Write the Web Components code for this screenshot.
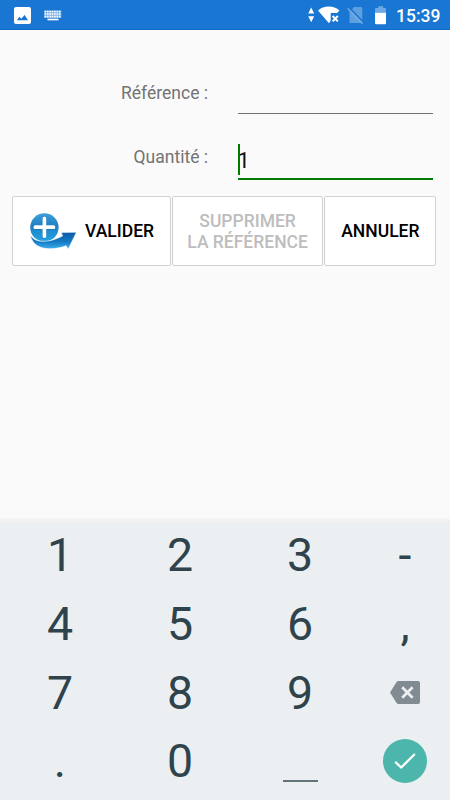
<!DOCTYPE html>
<html lang="fr">
<head>
<meta charset="UTF-8">
<meta name="viewport" content="width=device-width, initial-scale=1.0">
<title>Quantité</title>
<style>
    body {
        margin: 0;
        font-family: Roboto, "Liberation Sans", sans-serif;
    }
</style>
</head>
<body>
<stock-screen></stock-screen>

<script>
class StatusBar extends HTMLElement {

    constructor() {
        super()
        this.shadow = this.attachShadow({ mode: 'open' })
    }

    connectedCallback() {
        this.render()
    }

    render() {
        this.shadow.innerHTML =
            /*html*/
            `
        <style>
            :host {
            display: flex;
            justify-content: space-between;
            align-items: center;
            height: 30px;
            box-sizing: border-box;
            padding: 0 10px 0 14px;
            background-color: #1976d2;
            border-bottom: 1px solid #1469c4;
            color: white;
            }

            svg {
            display: block;
            }

            .notifications, .system {
            display: flex;
            align-items: center;
            }

            .notifications {
            gap: 13px;
            padding-top: 1px;
            }

            .clock {
            font-size: 17.5px;
            font-weight: 500;
            line-height: 30px;
            margin: 2px 0 0 9px;
            width: 44px;
            white-space: nowrap;
            }
        </style>

        <div class="notifications">
            <svg width="17" height="17" viewBox="0 0 17 17">
                <rect width="17" height="17" rx="2" fill="#fff"/>
                <path d="M2.8 13.2 L5.5 9.8 L7.3 11.7 L10.6 8 L14 13.2 Z" fill="#1976d2"/>
            </svg>
            <svg width="18" height="11" viewBox="0 0 18 11">
                <rect x="0.3" y="0.5" width="17" height="7.3" fill="#fff" opacity=".45"/>
                <path d="M0.5 1.5H17.3M0.5 4H17.3M0.5 6.6H17.3" stroke="#fff" stroke-width="1.7" stroke-dasharray="1.6 .8"/>
                <path d="M3.5 9.5H14.5" stroke="#fff" stroke-width="1.7"/>
            </svg>
        </div>
        <div class="system">
            <svg width="79" height="22" viewBox="0 0 79 22">
                <path d="M0.2 9.6 L3.2 3.6 L6.2 9.6Z M0.2 12.2 H6.2 L3.2 18.2Z" fill="#fff"/>
                <path d="M10 6.4 C15.5 1.2 26 1.2 31.5 6.4 L29 9.1 H22.7 V16.6 L21 19.2 Z" fill="#fff"/>
                <path d="M24.6 12 L29.8 17.4 M29.8 12 L24.6 17.4" stroke="#fff" stroke-width="2"/>
                <path d="M41.5 8 L46 3 H53 Q54.3 3 54.3 4.5 V19 H41.5 Z" fill="#5e9fe0"/>
                <path d="M40.6 3 L55.8 18.6" stroke="#1976d2" stroke-width="1.6"/>
                <path d="M39.7 4.5 L54.6 19.7" stroke="#76aee6" stroke-width="1.4"/>
                <path d="M67 8.7 V5 Q67 4 68 4 H70.3 V2.2 H75.2 V4 H77 Q78 4 78 5 V8.7 Z" fill="#6ca8e3"/>
                <path d="M67 8.7 H78 V19 Q78 20.3 77 20.3 H68 Q67 20.3 67 19 Z" fill="#fff"/>
            </svg>
            <span class="clock">15:39</span>
        </div>
        `
    }

}

customElements.define('status-bar', StatusBar);

class FormField extends HTMLElement {

    constructor() {
        super()
        this.shadow = this.attachShadow({ mode: 'open' })
    }

    connectedCallback() {
        this.render()
    }

    render() {
        this.shadow.innerHTML =
            /*html*/
            `
        <style>
            :host {
            display: grid;
            grid-template-columns: 208px 195px;
            column-gap: 29.5px;
            height: 65px;
            }

            .label {
            color: #737373;
            font-size: 17.5px;
            line-height: 22px;
            padding-top: 22px;
            text-align: right;
            white-space: nowrap;
            }

            :host([focused]) .label {
            padding-top: 21px;
            }

            .value {
            position: relative;
            box-sizing: border-box;
            height: 54px;
            padding-top: 20px;
            border-bottom: 1px solid #737373;
            color: #111;
            font-size: 22px;
            line-height: 32px;
            }

            :host([focused]) .value {
            height: 55px;
            border-bottom: 2px solid #007d00;
            }

            /* curseur de saisie */
            :host([focused]) .value::before {
            content: "";
            position: absolute;
            left: 0;
            top: 19px;
            width: 2px;
            height: 31px;
            background-color: #007d00;
            }
        </style>

        <div class="label">${this.getAttribute("label")}</div>
        <div class="value"><slot></slot></div>
        `
    }

}

customElements.define('form-field', FormField);

class ActionButton extends HTMLElement {

    constructor() {
        super()
        this.shadow = this.attachShadow({ mode: 'open' })
    }

    connectedCallback() {
        this.render()
    }

    render() {
        this.shadow.innerHTML =
            /*html*/
            `
        <style>
            :host {
            display: flex;
            }

            button {
            display: flex;
            justify-content: center;
            align-items: center;
            gap: 8px;
            width: 100%;
            padding: 1px 0 0;
            border: 1px solid #d2d2d2;
            border-radius: 2px;
            background-color: white;
            color: black;
            font-family: inherit;
            font-size: 17.5px;
            font-weight: 500;
            line-height: 20.5px;
            text-align: center;
            white-space: nowrap;
            }

            button:disabled {
            color: #bdbdbd;
            }
        </style>

        <button ${this.hasAttribute("disabled") ? "disabled" : ""}>
            <slot name="icon"></slot>
            <span><slot></slot></span>
        </button>
        `
    }

}

customElements.define('action-button', ActionButton);

class AddIcon extends HTMLElement {

    constructor() {
        super()
        this.shadow = this.attachShadow({ mode: 'open' })
    }

    connectedCallback() {
        this.render()
    }

    render() {
        this.shadow.innerHTML =
            /*html*/
            `
        <style>
            :host {
            display: block;
            width: 48px;
            height: 38px;
            margin-top: -2px;
            }

            svg {
            display: block;
            }
        </style>

        <svg width="48" height="38" viewBox="0 0 48 38">
            <defs>
                <linearGradient id="disc" x1="0" y1="0" x2="0" y2="1">
                    <stop offset="0" stop-color="#3f9fd8"/>
                    <stop offset=".45" stop-color="#1c80c4"/>
                    <stop offset="1" stop-color="#25a5e2"/>
                </linearGradient>
                <linearGradient id="arrow" x1="0" y1="0" x2="0" y2="1">
                    <stop offset="0" stop-color="#0b59a5"/>
                    <stop offset=".55" stop-color="#1379c5"/>
                    <stop offset="1" stop-color="#3eb2ec"/>
                </linearGradient>
            </defs>
            <circle cx="15.4" cy="15.5" r="14.2" fill="url(#disc)"/>
            <path d="M1.2 23 C6 31.5 20 31 33.6 24 L32.2 20.4 L47.4 20.2 L39.2 37.2 L37.2 33.8 C22 39 4.5 38.5 1.2 23 Z" fill="url(#arrow)" stroke="#fff" stroke-width=".6"/>
            <path d="M15.4 6.2 V24.6 M6 15.4 H24.8" stroke="#1569a9" stroke-width="4.8" stroke-linecap="round" opacity=".5"/>
            <path d="M15.4 6.3 V24.2 M6.3 15.2 H24.5" stroke="#fff" stroke-width="3.7" stroke-linecap="round"/>
        </svg>
        `
    }

}

customElements.define('add-icon', AddIcon);

class NumericKeyboard extends HTMLElement {

    constructor() {
        super()
        this.shadow = this.attachShadow({ mode: 'open' })
    }

    connectedCallback() {
        this.render()
    }

    render() {
        this.shadow.innerHTML =
            /*html*/
            `
        <style>
            :host {
            display: grid;
            grid-template-columns: repeat(3, 120px) 90px;
            grid-template-rows: repeat(4, 68.7px);
            box-sizing: border-box;
            height: 280px;
            border-top: 2px solid #f1f2f1;
            background-color: #eceff1;
            box-shadow: 0 -1px 2px rgba(0, 0, 0, 0.05);
            color: #2f434c;
            font-size: 46.5px;
            line-height: 68px;
            }

            div {
            display: flex;
            justify-content: center;
            align-items: center;
            margin-top: -2px;
            }

            svg {
            display: block;
            }

            .space {
            align-items: flex-end;
            }

            .space::before {
            content: "";
            width: 35px;
            height: 2px;
            margin-bottom: 15px;
            background-color: #64727a;
            }

            .delete, .enter {
            margin-top: -3px;
            }

            .enter span {
            display: flex;
            justify-content: center;
            align-items: center;
            width: 44px;
            height: 44px;
            border-radius: 50%;
            background-color: #4db6ac;
            }
        </style>

        <div>1</div><div>2</div><div>3</div><div>-</div>
        <div>4</div><div>5</div><div>6</div><div>,</div>
        <div>7</div><div>8</div><div>9</div>
        <div class="delete">
            <svg width="30" height="23" viewBox="0 0 30 23">
                <path d="M8.3 0 H28 Q30 0 30 2 V21 Q30 23 28 23 H8.3 Q7.3 23 6.6 22 L0 11.5 L6.6 1 Q7.3 0 8.3 0Z" fill="#808c91"/>
                <path d="M12.2 6.3 L22.6 16.7 M22.6 6.3 L12.2 16.7" stroke="#eceff1" stroke-width="2.7"/>
            </svg>
        </div>
        <div>.</div><div>0</div><div class="space"></div>
        <div class="enter">
            <span>
                <svg width="24" height="18" viewBox="0 0 24 18">
                    <path d="M2.2 9.8 L8.2 15.5 L21.8 2" fill="none" stroke="#fff" stroke-width="2.3"/>
                </svg>
            </span>
        </div>
        `
    }

}

customElements.define('numeric-keyboard', NumericKeyboard);

class StockScreen extends HTMLElement {

    constructor() {
        super()
        this.shadow = this.attachShadow({ mode: 'open' })
    }

    connectedCallback() {
        this.render()
    }

    render() {
        this.shadow.innerHTML =
            /*html*/
            `
        <style>
            :host {
            display: flex;
            flex-direction: column;
            width: 450px;
            height: 800px;
            overflow: hidden;
            background-color: #fafafa;
            }

            main {
            flex: 1;
            padding-top: 30px;
            }

            .actions {
            display: grid;
            grid-template-columns: 159.4px 152.6px 113px;
            height: 70px;
            margin: 6px 0 0 12.4px;
            }

            action-button {
            margin-right: 1px;
            }
        </style>

        <status-bar></status-bar>
        <main>
            <form-field label="Référence :"></form-field>
            <form-field label="Quantité :" focused>1</form-field>
            <div class="actions">
                <action-button><add-icon slot="icon"></add-icon>VALIDER</action-button>
                <action-button disabled>SUPPRIMER<br>LA RÉFÉRENCE</action-button>
                <action-button>ANNULER</action-button>
            </div>
        </main>
        <numeric-keyboard></numeric-keyboard>
        `
    }

}

customElements.define('stock-screen', StockScreen);
</script>
</body>
</html>
